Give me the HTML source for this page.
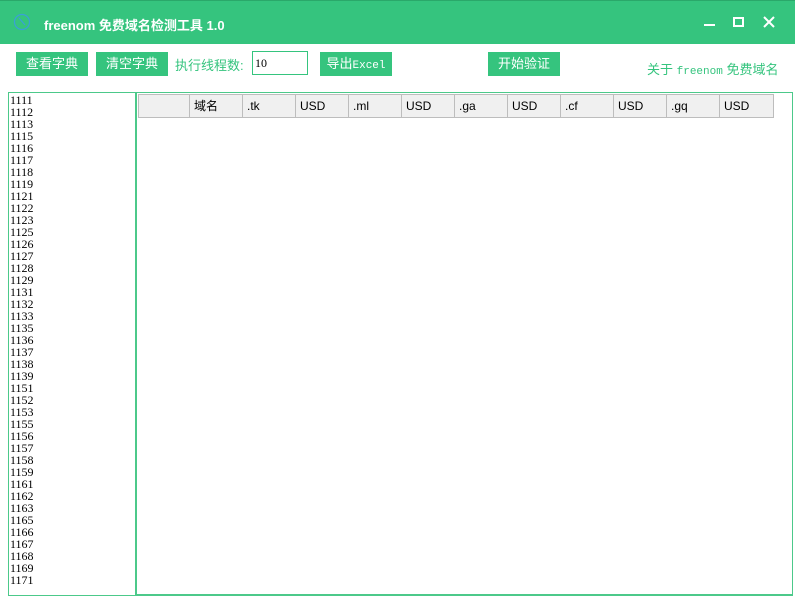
<!DOCTYPE html>
<html><head><meta charset="utf-8"><style>
*{margin:0;padding:0;box-sizing:border-box}
body{width:795px;height:598px;background:#fff;position:relative;overflow:hidden;font-family:"Liberation Sans","Noto Sans CJK SC",sans-serif}
.title{position:absolute;left:0;top:0;width:795px;height:44px;background:#35c47e;border-top:1px solid #2aa86a}
.title .t{position:absolute;left:44px;top:14px;color:#fff;font-weight:bold;font-size:13px}
.btn{position:absolute;top:52px;height:24px;background:#35c47e;color:#fff;font-size:13px;text-align:center;line-height:24px}
.lbl{position:absolute;color:#35c47e;font-size:13px}
.box{position:absolute;border:1px solid #4cc98a}
.nums{position:absolute;left:10px;top:94px;font-family:"Liberation Serif",serif;font-size:12px;line-height:12px;color:#000}
.hdr{position:absolute;left:138px;top:94px;height:24px;display:flex;border:1px solid #bdbdbd;background:#f0f0f0}
.hdr div{height:22px;border-right:1px solid #bdbdbd;font-size:12px;line-height:22px;padding-left:4px;color:#000}
.hdr div:last-child{border-right:none}
</style></head><body>
<div class="title">
<svg style="position:absolute;left:13px;top:12px" width="18" height="18" viewBox="0 0 18 18"><circle cx="9" cy="9" r="7.5" fill="none" stroke="#3aa0d8" stroke-width="1.2"/><path d="M6 5 L12 12" stroke="#3aa0d8" stroke-width="1.2"/></svg>
<div class="t">freenom 免费域名检测工具 1.0</div>
<div style="position:absolute;left:704px;top:23px;width:11px;height:2px;background:#fff"></div>
<div style="position:absolute;left:733px;top:16px;width:11px;height:10px;border:2px solid #fff"></div>
<svg style="position:absolute;left:763px;top:15px" width="12" height="12" viewBox="0 0 12 12"><path d="M1 1L11 11M11 1L1 11" stroke="#fff" stroke-width="2"/></svg>
</div>
<div class="btn" style="left:16px;width:72px">查看字典</div>
<div class="btn" style="left:96px;width:72px">清空字典</div>
<div class="lbl" style="left:175px;top:55px">执行线程数:</div>
<div style="position:absolute;left:252px;top:51px;width:56px;height:24px;border:1px solid #35c47e;font-size:12px;line-height:22px;padding-left:2px;font-family:'Liberation Serif',serif">10</div>
<div class="btn" style="left:320px;width:72px">导出<span style="font-family:'Liberation Mono',monospace;font-size:11px">Excel</span></div>
<div class="btn" style="left:488px;width:72px">开始验证</div>
<div class="lbl" style="left:647px;top:59px">关于 <span style="font-family:'Liberation Mono',monospace;font-size:11px">freenom</span> 免费域名</div>
<div class="box" style="left:8px;top:92px;width:129px;height:504px;border-width:1px 2px 1px 1px"></div>
<div class="box" style="left:136px;top:92px;width:657px;height:504px;border-width:1px 1px 2px 1px"></div>
<div class="nums">1111<br>1112<br>1113<br>1115<br>1116<br>1117<br>1118<br>1119<br>1121<br>1122<br>1123<br>1125<br>1126<br>1127<br>1128<br>1129<br>1131<br>1132<br>1133<br>1135<br>1136<br>1137<br>1138<br>1139<br>1151<br>1152<br>1153<br>1155<br>1156<br>1157<br>1158<br>1159<br>1161<br>1162<br>1163<br>1165<br>1166<br>1167<br>1168<br>1169<br>1171</div>
<div class="hdr">
<div style="width:51px"></div><div style="width:53px">域名</div><div style="width:53px">.tk</div><div style="width:53px">USD</div><div style="width:53px">.ml</div><div style="width:53px">USD</div><div style="width:53px">.ga</div><div style="width:53px">USD</div><div style="width:53px">.cf</div><div style="width:53px">USD</div><div style="width:53px">.gq</div><div style="width:53px">USD</div>
</div>
</body></html>
